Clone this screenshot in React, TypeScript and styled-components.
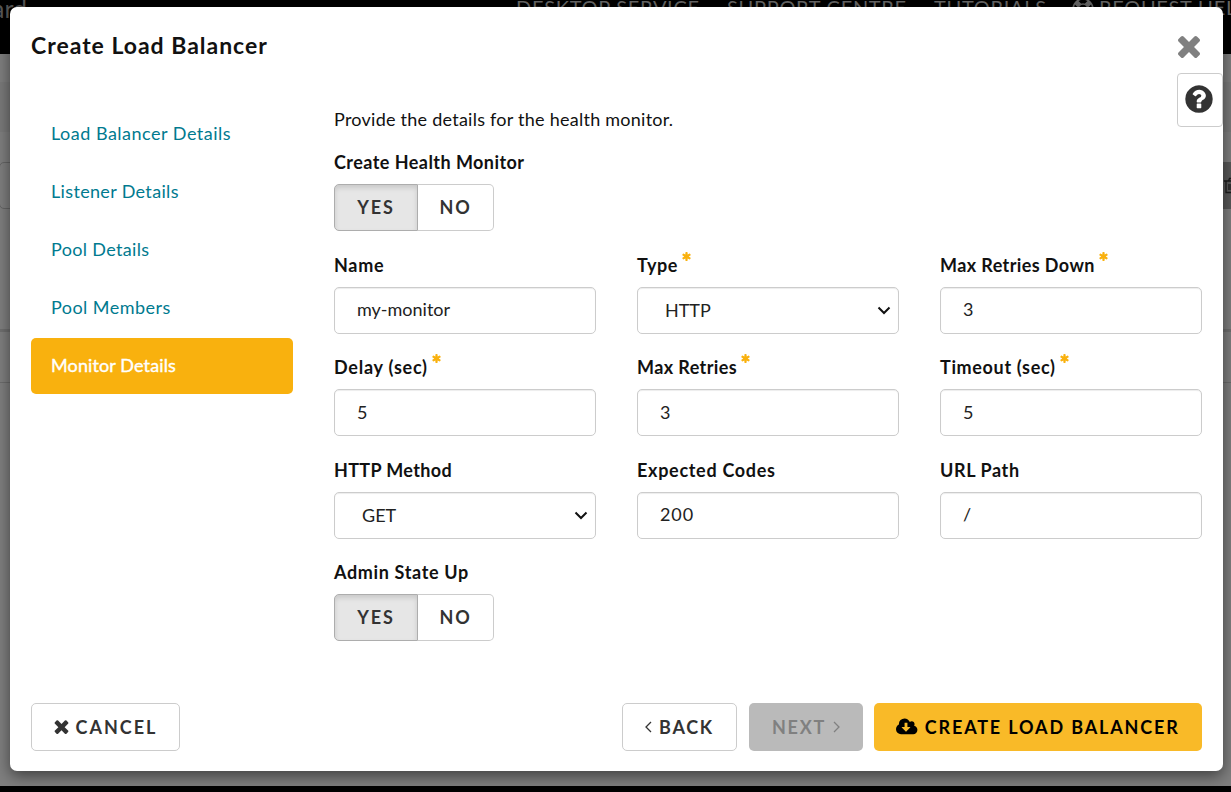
import React from 'react';
import styled, { createGlobalStyle } from 'styled-components';

const GlobalStyle = createGlobalStyle`
  * { box-sizing: border-box; }
  html, body { margin: 0; padding: 0; height: 792px; overflow: hidden; background: #000; }
  body { font-family: Lato, 'Open Sans', 'Liberation Sans', sans-serif; font-size: 18px; color: #111; }
  button, input { font-family: inherit; font-size: inherit; margin: 0; }
`;

const Page = styled.div`
  position: relative;
  width: 1231px;
  height: 792px;
  overflow: hidden;
  background: #000;
`;

const NavBar = styled.div`
  display: flex;
  justify-content: space-between;
  height: 54px;
  color: #666;
  line-height: 20px;
  white-space: nowrap;
`;

const Brand = styled.div`
  font-size: 25px;
  line-height: 17px;
  margin-left: -8px;
  color: #555;
`;

const NavLinks = styled.div`
  display: flex;
  width: 715px;
  padding-top: 0;
  font-size: 20px;
  line-height: 15px;
`;

const NavLink = styled.span<{ $w: number; $ls?: number }>`
  flex: none;
  display: flex;
  gap: 5px;
  width: ${p => p.$w}px;
  letter-spacing: ${p => p.$ls ?? 0.7}px;

  svg { flex: none; margin: -2px 0 0 -1px; }
`;

const Backdrop = styled.div`
  height: 732px;
  background: #7f7f7f;
`;

const Strip = styled.div<{ $h: number; $bg?: string; $line?: string }>`
  display: flex;
  justify-content: space-between;
  height: ${p => p.$h}px;
  background: ${p => p.$bg ?? 'transparent'};
  border-top: ${p => (p.$line ? `1px solid ${p.$line}` : 'none')};
`;

const PageInput = styled.div`
  width: 40px;
  margin-left: -1px;
  border: 1px solid #666;
  border-radius: 5px;
`;

const PageDelete = styled.div`
  display: flex;
  align-items: center;
  width: 8px;
  overflow: hidden;
  background: #595959;
  color: #1c1c1c;
`;

const Modal = styled.div`
  position: absolute;
  left: 10px;
  top: 7px;
  width: 1213px;
  height: 764px;
  display: flex;
  flex-direction: column;
  background: #fff;
  border-radius: 7px;
  box-shadow: 0 5px 15px rgba(0, 0, 0, 0.5);
`;

const Header = styled.div`
  display: flex;
  justify-content: space-between;
  align-items: center;
  height: 78px;
  padding: 0 22px 0 21px;
`;

const Title = styled.h1`
  margin: 0;
  padding-bottom: 2px;
  font-size: 23px;
  font-weight: 700;
  line-height: 30px;
  letter-spacing: 0.98px;
`;

const Close = styled.button`
  display: flex;
  padding: 0;
  border: 0;
  background: none;
  color: #808080;
`;

const Help = styled.button`
  position: absolute;
  right: 0;
  top: 66px;
  width: 46px;
  height: 54px;
  display: flex;
  justify-content: center;
  padding: 9px 2px 0 0;
  border: 1px solid #ccc;
  border-radius: 4px;
  background: #fff;
  color: #333;
`;

const Body = styled.div`
  display: flex;
  gap: 41px;
  height: 618px;
  padding: 21px 21px 0;
`;

const Steps = styled.nav`
  display: flex;
  flex-direction: column;
  gap: 2px;
  width: 262px;
`;

const Step = styled.a<{ $active?: boolean; $ls: number }>`
  display: flex;
  align-items: center;
  height: 56px;
  padding: 0 20px 2px;
  border-radius: 5px;
  letter-spacing: ${p => p.$ls}px;
  color: ${p => (p.$active ? '#fff' : '#007a8f')};
  background: ${p => (p.$active ? '#f9b10e' : 'transparent')};
  -webkit-text-stroke: ${p => (p.$active ? '0.4px #fff' : '0')};
`;

const Form = styled.form`
  width: 868px;
`;

const Intro = styled.p<{ $ls: number }>`
  margin: 0;
  height: 42px;
  line-height: 26px;
  letter-spacing: ${p => p.$ls}px;
`;

const Grid = styled.div`
  display: grid;
  grid-template-columns: repeat(3, 262px);
  grid-auto-rows: 102.6px;
  column-gap: 41px;
`;

const Field = styled.div<{ $wide?: boolean }>`
  grid-column: ${p => (p.$wide ? '1 / -1' : 'auto')};
`;

const Label = styled.label<{ $ls: number }>`
  display: flex;
  gap: 4px;
  height: 36px;
  line-height: 28px;
  font-weight: 700;
  letter-spacing: ${p => p.$ls}px;

  svg { margin-top: 1px; color: #f9b10e; }
`;

const Input = styled.input<{ $ls: number }>`
  display: block;
  width: 262px;
  height: 47px;
  padding: 0 22px 2px;
  border: 1px solid #ccc;
  border-radius: 5px;
  outline: 0;
  color: #222;
  background: #fff;
  box-shadow: inset 0 1px 1px rgba(0, 0, 0, 0.075);
  letter-spacing: ${p => p.$ls}px;
`;

const SelectBox = styled.div<{ $ls: number }>`
  display: flex;
  align-items: center;
  justify-content: space-between;
  height: 47px;
  padding: 0 7px 0 27px;
  border: 1px solid #ccc;
  border-radius: 5px;
  color: #222;
  box-shadow: inset 0 1px 1px rgba(0, 0, 0, 0.075);
  letter-spacing: ${p => p.$ls}px;
`;

const Toggle = styled.div`
  display: flex;
  height: 47px;
`;

const ToggleOption = styled.button<{ $on?: boolean }>`
  width: ${p => (p.$on ? 84 : 76)}px;
  padding: 0 0 2px;
  font-weight: 700;
  letter-spacing: 1.9px;
  color: #333;
  background: ${p => (p.$on ? '#e6e6e6' : '#fff')};
  border: 1px solid ${p => (p.$on ? '#adadad' : '#ccc')};
  border-left-width: ${p => (p.$on ? 1 : 0)}px;
  border-radius: ${p => (p.$on ? '5px 0 0 5px' : '0 5px 5px 0')};
  box-shadow: ${p => (p.$on ? 'inset 0 3px 5px rgba(0, 0, 0, 0.125)' : 'none')};
`;

const Footer = styled.div`
  display: flex;
  height: 48px;
  padding: 0 21px;
`;

const Button = styled.button<{ $w: number; $kind?: 'primary' | 'disabled'; $ls?: number }>`
  display: flex;
  align-items: center;
  justify-content: center;
  gap: 7px;
  width: ${p => p.$w}px;
  height: 48px;
  padding: 0 0 1px;
  font-weight: 700;
  white-space: nowrap;
  letter-spacing: ${p => p.$ls ?? 1.7}px;
  border-radius: 5px;
  border: ${p => (p.$kind ? '0' : '1px solid #ccc')};
  color: ${p => (p.$kind === 'primary' ? '#000' : p.$kind === 'disabled' ? '#808080' : '#333')};
  background: ${p => (p.$kind === 'primary' ? '#f9ba28' : p.$kind === 'disabled' ? '#bababa' : '#fff')};
`;

const Actions = styled.div`
  display: flex;
  margin-left: auto;
  gap: 12px;
  & > :last-child { margin-left: -1px; }
`;

const Glyph = ({ d, size, w = 1792, vb }: { d: string; size: number; w?: number; vb?: string }) => (
  <svg width={(size * w) / 1792} height={size} viewBox={vb ?? `0 0 ${w} 1792`} fill="currentColor"><path d={d} /></svg>
);

const TIMES = 'M1490 1322q0 40-28 68l-136 136q-28 28-68 28t-68-28l-294-294-294 294q-28 28-68 28t-68-28l-136-136q-28-28-28-68t28-68l294-294-294-294q-28-28-28-68t28-68l136-136q28-28 68-28t68 28l294 294 294-294q28-28 68-28t68 28l136 136q28 28 28 68t-28 68l-294 294 294 294q28 28 28 68z';
const QUESTION = 'M1024 1376v-192q0-14-9-23t-23-9h-192q-14 0-23 9t-9 23v192q0 14 9 23t23 9h192q14 0 23-9t9-23zm256-672q0-88-55.500-163t-138.500-116-170-41q-243 0-371 213-15 24 8 42l132 100q7 6 19 6 16 0 25-12 53-68 86-92 34-24 86-24 48 0 85.500 26t37.500 59q0 38-20 61t-68 45q-63 28-115.500 86.500t-52.500 125.500v36q0 14 9 23t23 9h192q14 0 23-9t9-23q0-19 21.500-49.500t54.500-49.500q32-18 49-28.500t46-35 44.500-48 28-60.500 12.500-81zm384 192q0 209-103 385.500t-279.500 279.500-385.500 103-385.500-103-279.500-279.500-103-385.500 103-385.500 279.500-279.500 385.500-103 385.500 103 279.500 279.500 103 385.500z';
const CLOUD = 'M1280 928q0-14-9-23t-23-9h-224v-352q0-13-9.500-22.500t-22.500-9.500h-192q-13 0-22.500 9.500t-9.500 22.500v352h-224q-13 0-22.500 9.500t-9.500 22.500q0 14 9 23l352 352q9 9 23 9t23-9l351-351q10-12 10-24zm640 224q0 159-112.500 271.500t-271.500 112.500h-1088q-185 0-316.500-131.500t-131.500-316.500q0-130 70-240t188-165q-2-30-2-43 0-212 150-362t362-150q156 0 285.500 87t188.500 231q71-62 166-62 106 0 181 75t75 181q0 76-41 138 130 31 213.500 135.500t83.500 238.500z';
const ASTERISK = 'M1546 1050q46 26 59.500 77.500t-12.500 97.500l-64 110q-26 46-77.500 59.500t-97.500-12.500l-266-153v307q0 52-38 90t-90 38h-128q-52 0-90-38t-38-90v-307l-266 153q-46 26-97.500 12.500t-77.500-59.500l-64-110q-26-46-12.500-97.500t59.500-77.500l266-154-266-154q-46-26-59.500-77.500t12.500-97.500l64-110q26-46 77.500-59.500t97.500 12.500l266 153v-307q0-52 38-90t90-38h128q52 0 90 38t38 90v307l266-153q46-26 97.500-12.500t77.500 59.500l64 110q26 46 12.500 97.500t-59.500 77.500l-266 154z';

const Required = () => <Glyph d={ASTERISK} size={9} vb="140 128 1512 1536" />;

const Angle = ({ right }: { right?: boolean }) => (
  <svg width="7" height="12" viewBox="0 0 7 12" fill="none" stroke="currentColor" strokeWidth="1.3">
    <path d={right ? 'M1 1l5 5-5 5' : 'M6 1L1 6l5 5'} />
  </svg>
);

const Chevron = () => (
  <svg width="14" height="9" viewBox="0 0 14 9" fill="none" stroke="#111" strokeWidth="2">
    <path d="M1.500 1.500L7 7l5.500-5.500" />
  </svg>
);

const LifeRing = () => (
  <svg width="22" height="22" viewBox="0 0 22 22" fill="none" stroke="#666">
    <circle cx="11" cy="11" r="10" strokeWidth="1.500" />
    <circle cx="11" cy="11" r="5" strokeWidth="1.500" />
    <path d="M4 4l3.500 3.500M18 4l-3.500 3.500M4 18l3.500-3.500M18 18l-3.500-3.500" strokeWidth="5" />
  </svg>
);

const Trash = () => (
  <svg width="16" height="17" viewBox="0 0 16 17" fill="none" stroke="currentColor" strokeWidth="1.300" style={{ flex: 'none' }}>
    <path d="M1 4h14M3 4v11.500h10V4M5.500 4l1-2.500h3l1 2.500M6 7v6M8 7v6M10 7v6" />
  </svg>
);

const steps = [
  { text: 'Load Balancer Details', ls: 0.5 },
  { text: 'Listener Details', ls: 0.34 },
  { text: 'Pool Details', ls: 0.34 },
  { text: 'Pool Members', ls: 0.45 },
  { text: 'Monitor Details', ls: 0.12, active: true },
];

type FieldData = { label: string; ls: number; value: string; vls?: number; required?: boolean; select?: boolean };

const fields: FieldData[] = [
  { label: 'Name', ls: 0.7, value: 'my-monitor' },
  { label: 'Type', ls: 0.6, value: 'HTTP', required: true, select: true },
  { label: 'Max Retries Down', ls: 0.4, value: '3', required: true },
  { label: 'Delay (sec)', ls: 0.76, value: '5', required: true },
  { label: 'Max Retries', ls: 0.4, value: '3', required: true },
  { label: 'Timeout (sec)', ls: 0.66, value: '5', required: true },
  { label: 'HTTP Method', ls: 0.35, value: 'GET', select: true },
  { label: 'Expected Codes', ls: 0.7, value: '200', vls: 0.9 },
  { label: 'URL Path', ls: 0.6, value: '/' },
];

const YesNo = ({ label, ls }: { label: string; ls: number }) => (
  <Field $wide>
    <Label $ls={ls}>{label}</Label>
    <Toggle>
      <ToggleOption type="button" $on>YES</ToggleOption>
      <ToggleOption type="button">NO</ToggleOption>
    </Toggle>
  </Field>
);

export default function App() {
  return (
    <Page>
      <GlobalStyle />
      <NavBar>
        <Brand>ard</Brand>
        <NavLinks>
          <NavLink $w={211}>DESKTOP SERVICE</NavLink>
          <NavLink $w={207}>SUPPORT CENTRE</NavLink>
          <NavLink $w={139}>TUTORIALS</NavLink>
          <NavLink $w={170}><LifeRing />REQUEST HELP</NavLink>
        </NavLinks>
      </NavBar>
      <Backdrop>
        <Strip $h={28} />
        <Strip $h={50} $bg="#7a7a7a" />
        <Strip $h={30} />
        <Strip $h={47}><PageInput /><PageDelete><Trash /></PageDelete></Strip>
        <Strip $h={120} />
        <Strip $h={3} $bg="#6f6f6f" />
        <Strip $h={50} />
        <Strip $h={10} $line="#6c6c6c" />
      </Backdrop>
      <Modal>
        <Header>
          <Title>Create Load Balancer</Title>
          <Close aria-label="Close"><Glyph d={TIMES} size={24} vb="302 258 1188 1296" /></Close>
        </Header>
        <Help aria-label="Help"><Glyph d={QUESTION} size={32} /></Help>
        <Body>
          <Steps>
            {steps.map(s => <Step key={s.text} $ls={s.ls} $active={s.active}>{s.text}</Step>)}
          </Steps>
          <Form>
            <Intro $ls={0.25}>Provide the details for the health monitor.</Intro>
            <Grid>
              <YesNo label="Create Health Monitor" ls={0.45} />
              {fields.map(f => (
                <Field key={f.label}>
                  <Label $ls={f.ls}>{f.label}{f.required && <Required />}</Label>
                  {f.select
                    ? <SelectBox $ls={f.vls ?? 0}>{f.value}<Chevron /></SelectBox>
                    : <Input $ls={f.vls ?? 0} defaultValue={f.value} />}
                </Field>
              ))}
              <YesNo label="Admin State Up" ls={0.65} />
            </Grid>
          </Form>
        </Body>
        <Footer>
          <Button $w={149} $ls={2}><Glyph d={TIMES} size={15} vb="302 258 1188 1296" />CANCEL</Button>
          <Actions>
            <Button $w={115}><Angle />BACK</Button>
            <Button $w={114} $kind="disabled">NEXT<Angle right /></Button>
            <Button $w={328} $kind="primary" $ls={1.85}><Glyph d={CLOUD} size={20} w={1920} />CREATE LOAD BALANCER</Button>
          </Actions>
        </Footer>
      </Modal>
    </Page>
  );
}
